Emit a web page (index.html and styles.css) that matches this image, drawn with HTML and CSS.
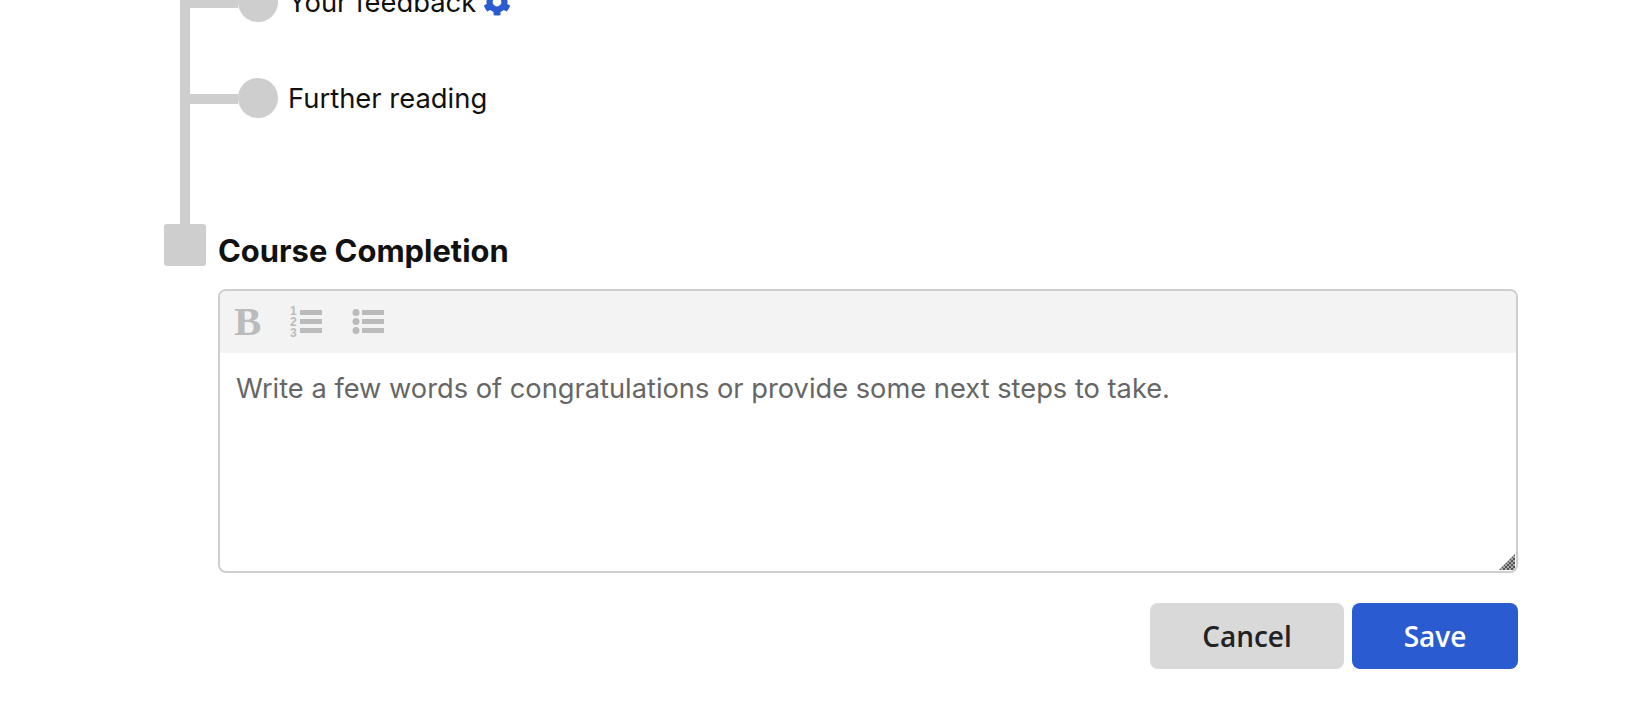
FILE: index.html
```html
<!DOCTYPE html>
<html>
<head>
    <title>Course Completion</title>
    <link rel="stylesheet" href="styles.css">
</head>
<body>
    <div class="page">
        <!-- Course outline -->
        <div class="steps">
            <div class="step">
                <div class="step-bar"></div>
                <div class="step-dot"></div>
                <span class="step-label">Your feedback</span>
                <svg class="step-gear" viewBox="0 0 512 512">
                    <path d="M487.4 315.7l-42.6-24.6c4.3-23.2 4.3-47 0-70.2l42.6-24.6c4.9-2.8 7.1-8.6 5.5-14-11.1-35.6-30-67.8-54.7-94.6-3.8-4.1-10-5.1-14.8-2.3L380.8 110c-17.9-15.4-38.5-27.3-60.8-35.1V25.8c0-5.6-3.9-10.5-9.4-11.7-36.7-8.2-74.3-7.8-109.2 0-5.5 1.2-9.4 6.1-9.4 11.7V75c-22.2 7.9-42.8 19.8-60.8 35.1L88.7 85.5c-4.9-2.8-11-1.9-14.8 2.3-24.7 26.7-43.6 58.9-54.7 94.6-1.7 5.4.6 11.2 5.5 14L67.3 221c-4.3 23.2-4.3 47 0 70.2l-42.6 24.6c-4.9 2.8-7.1 8.6-5.5 14 11.1 35.6 30 67.8 54.7 94.6 3.8 4.1 10 5.1 14.8 2.3l42.6-24.6c17.9 15.4 38.5 27.3 60.8 35.1v49.2c0 5.6 3.9 10.5 9.4 11.7 36.7 8.2 74.3 7.8 109.2 0 5.5-1.2 9.4-6.1 9.4-11.7v-49.2c22.2-7.9 42.8-19.8 60.8-35.1l42.6 24.6c4.9 2.8 11 1.9 14.8-2.3 24.7-26.7 43.6-58.9 54.7-94.6 1.5-5.5-.7-11.3-5.6-14.1zM256 336c-44.1 0-80-35.9-80-80s35.9-80 80-80 80 35.9 80 80-35.9 80-80 80z"/>
                </svg>
            </div>
            <div class="step">
                <div class="step-bar"></div>
                <div class="step-dot"></div>
                <span class="step-label">Further reading</span>
            </div>
        </div>

        <!-- Completion heading -->
        <div class="completion">
            <div class="completion-mark"></div>
            <h2 class="completion-title">Course Completion</h2>
        </div>

        <!-- Editor -->
        <div class="editor-wrap">
            <div class="editor">
                <div class="toolbar">
                    <span class="tool-bold">B</span>
                    <svg class="tool-list" width="32" height="32" viewBox="0 0 32 32">
                        <text class="tool-digit" x="-1" y="8.5">1</text>
                        <text class="tool-digit" x="-1" y="20">2</text>
                        <text class="tool-digit" x="-1" y="31">3</text>
                        <rect x="9" y="4" width="22" height="5"/>
                        <rect x="9" y="13" width="22" height="5"/>
                        <rect x="9" y="22" width="22" height="5"/>
                    </svg>
                    <svg class="tool-list" width="32" height="32" viewBox="0 0 32 32">
                        <circle cx="3" cy="6.5" r="3.5"/>
                        <circle cx="3" cy="15.5" r="3.5"/>
                        <circle cx="3" cy="24.5" r="3.5"/>
                        <rect x="9" y="4" width="22" height="5"/>
                        <rect x="9" y="13" width="22" height="5"/>
                        <rect x="9" y="22" width="22" height="5"/>
                    </svg>
                </div>
                <div class="editor-text">Write a few words of congratulations or provide some next steps to take.</div>
                <div class="editor-grip"></div>
            </div>

            <div class="actions">
                <button class="btn btn-cancel">Cancel</button>
                <button class="btn btn-save">Save</button>
            </div>
        </div>
    </div>
</body>
</html>
```

FILE: styles.css
```css
/* Page, scrolled so the first row is cut off at the top */
html, body {
    margin: 0;
    height: 100%;
    overflow: hidden;
    background-color: #fff;
}

body {
    font-family: Inter, "Liberation Sans", sans-serif;
    color: #111;
}

.page {
    margin-top: -18px;
    padding: 0 118px 0 164px;
}

/* Course outline */
.steps {
    display: flex;
    flex-direction: column;
    gap: 56px;
    margin-left: 16px;
    padding-bottom: 106px;
    border-left: 10px solid #cecece;
}

.step {
    display: flex;
    align-items: center;
    height: 40px;
}

.step-bar {
    width: 48px;
    height: 10px;
    margin-top: 2px;
    background-color: #cecece;
}

.step-dot {
    width: 40px;
    height: 40px;
    border-radius: 50%;
    background-color: #cecece;
}

.step-label {
    margin-left: 10px;
    font-size: 27.4px;
}

.step-gear {
    width: 28px;
    height: 28px;
    margin-left: 7px;
    fill: #2a5bd0;
}

/* Completion heading */
.completion {
    display: flex;
    gap: 12px;
    height: 42px;
}

.completion-mark {
    width: 42px;
    height: 42px;
    border-radius: 3px;
    background-color: #cecece;
}

.completion-title {
    margin: 10px 0 0;
    font-size: 30.9px;
    line-height: 34px;
    font-weight: 700;
}

/* Editor */
.editor-wrap {
    margin: 23px 0 0 54px;
}

.editor {
    position: relative;
    height: 280px;
    border: 2px solid #cecece;
    border-radius: 8px;
    overflow: hidden;
}

.toolbar {
    display: flex;
    align-items: center;
    gap: 30px;
    height: 62px;
    padding-left: 14px;
    background-color: #f3f3f3;
}

.tool-bold {
    width: 27px;
    margin-top: -2px;
    font-family: "Liberation Serif", serif;
    font-size: 41px;
    font-weight: 700;
    line-height: 60px;
    color: #bbb;
}

.tool-list {
    overflow: visible;
    fill: #bbb;
}

.tool-digit {
    font-family: "Liberation Sans", sans-serif;
    font-size: 12px;
    font-weight: 700;
}

.editor-text {
    padding: 18px 16px;
    font-size: 27.25px;
    line-height: 36px;
    color: #666;
}

.editor-grip {
    position: absolute;
    right: 1px;
    bottom: 1px;
    width: 16px;
    height: 16px;
    background-image: repeating-conic-gradient(#555 0 25%, #aaa 0 50%);
    background-size: 4px 4px;
    clip-path: polygon(100% 0, 100% 100%, 0 100%);
}

/* Buttons */
.actions {
    display: flex;
    justify-content: flex-end;
    gap: 8px;
    margin-top: 30px;
}

.btn {
    height: 66px;
    border: none;
    border-radius: 8px;
    font-family: "Open Sans", "Noto Sans", sans-serif;
    font-size: 28px;
    font-weight: 600;
    cursor: pointer;
}

.btn-cancel {
    width: 194px;
    background-color: #d9d9d9;
    color: #222;
}

.btn-save {
    width: 166px;
    background-color: #2a5bd0;
    color: #fff;
}
```
